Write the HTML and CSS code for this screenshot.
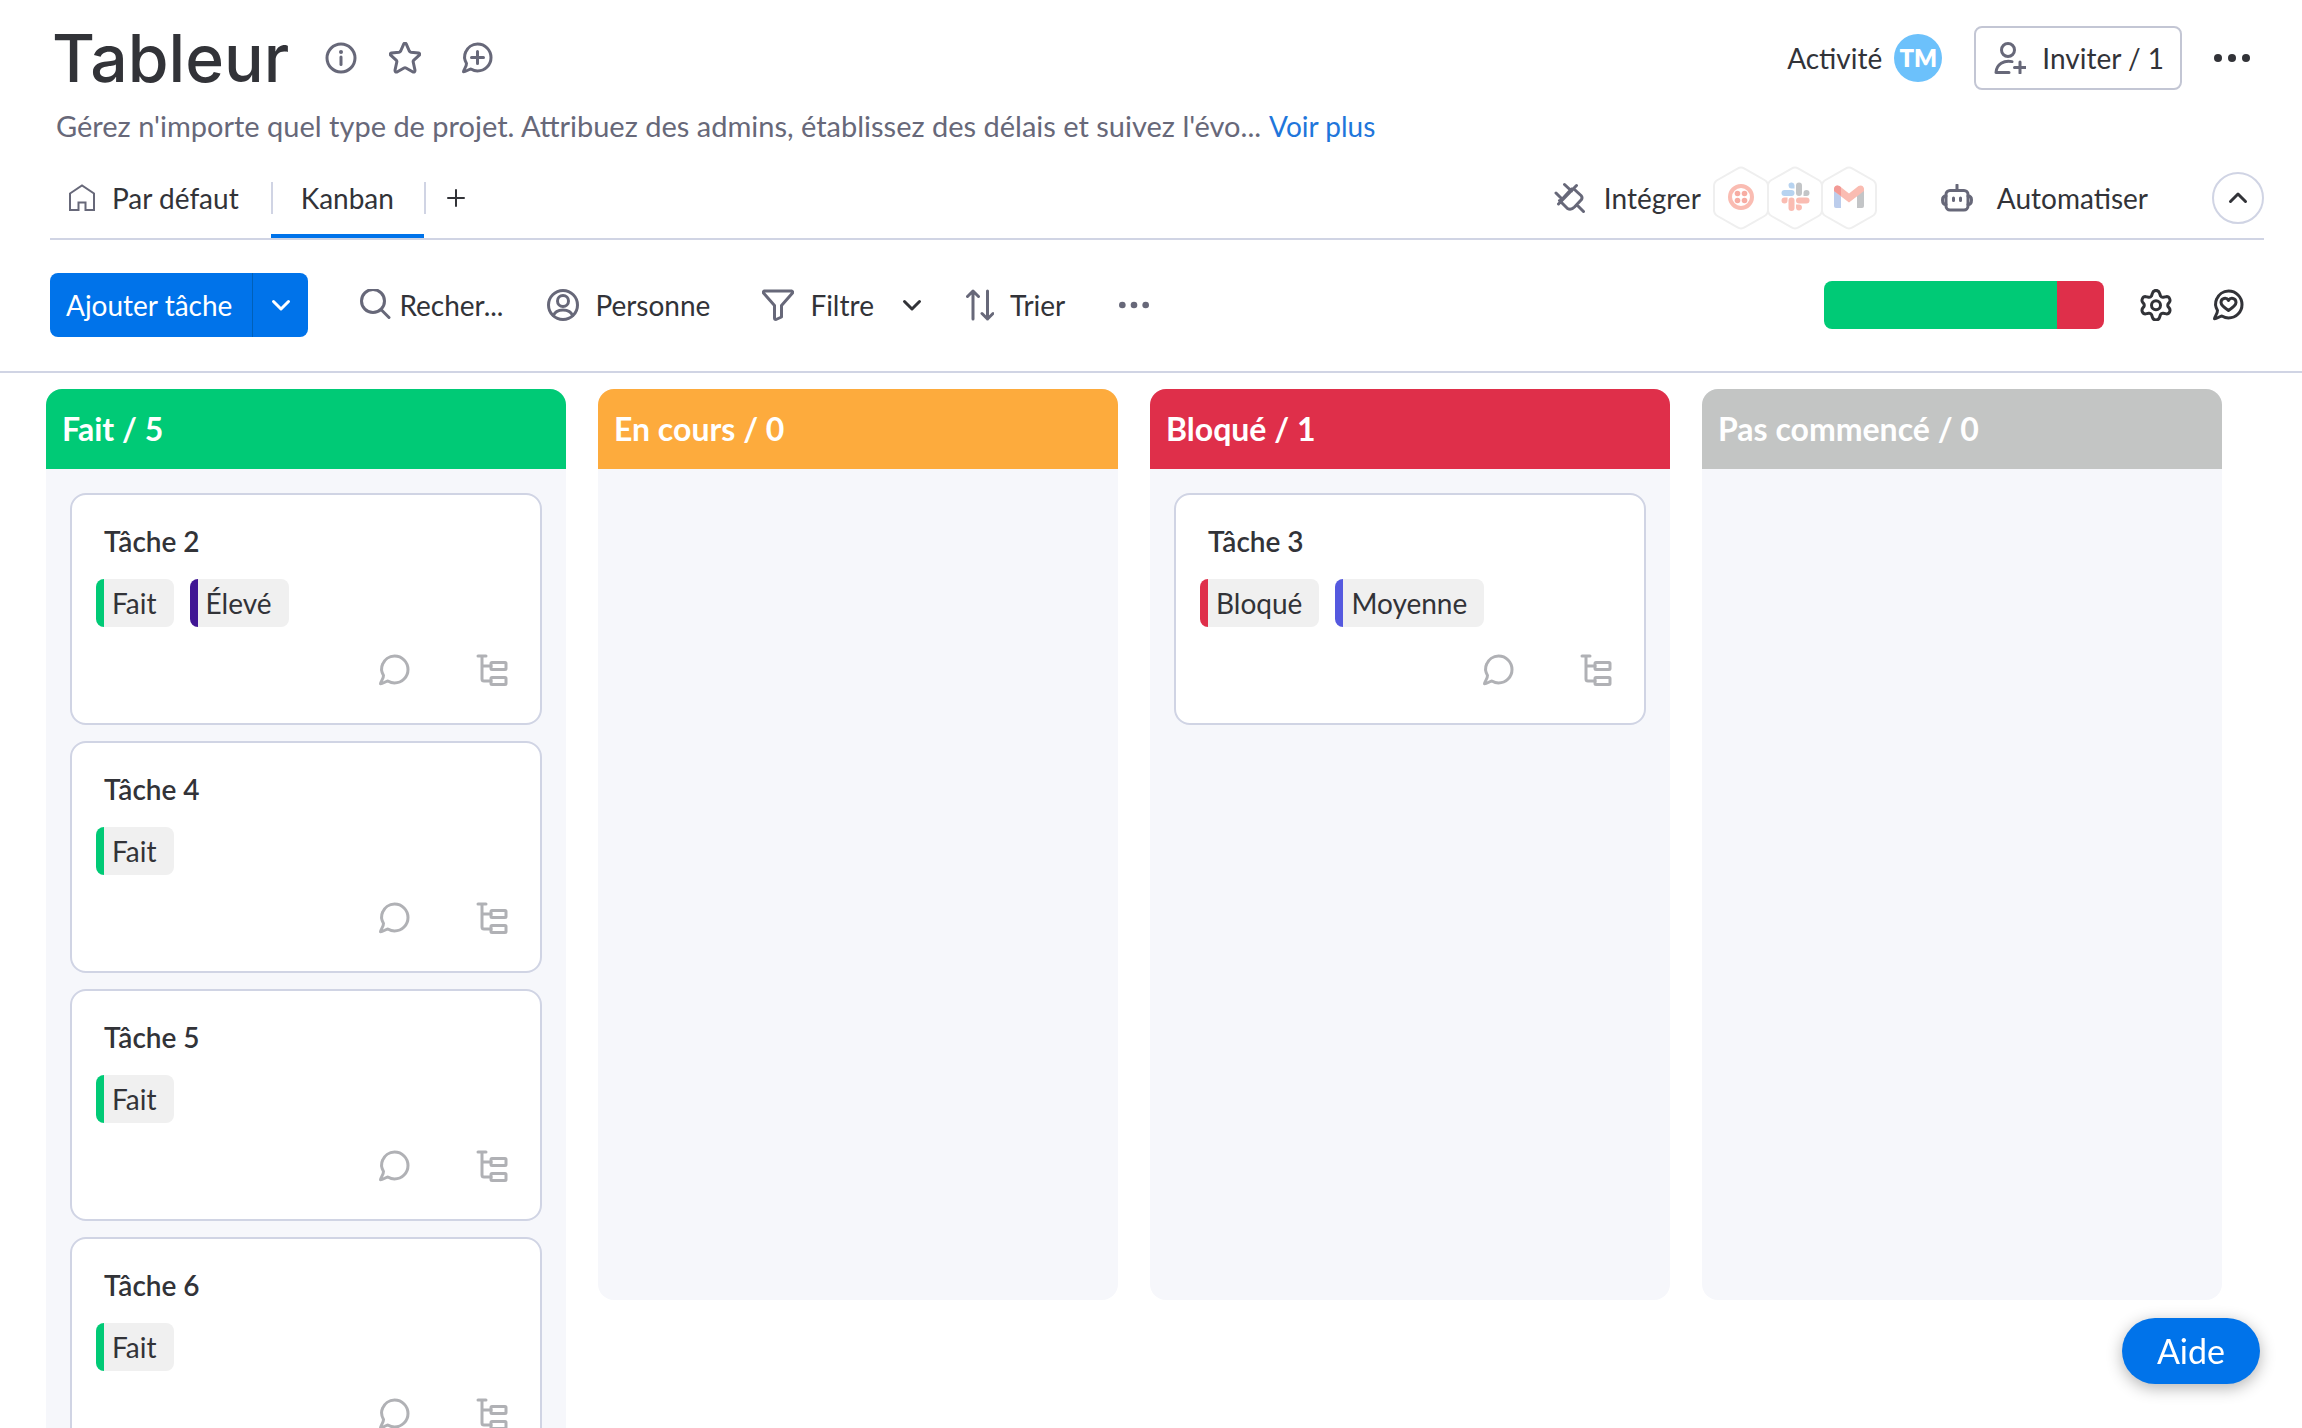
FILE: index.html
```html
<!DOCTYPE html>
<html lang="fr">
<head>
<meta charset="utf-8">
<title>Tableur</title>
<meta name="viewport" content="width=device-width, initial-scale=1">
<link rel="stylesheet" href="styles.css">
</head>
<body>
<svg class="sprite" aria-hidden="true">
  <symbol id="bubble" viewBox="0 0 32 32"><path d="M5.500 21.500 C3.500 18 3 13.500 4.700 10 C6.500 5.600 11 2 16.500 2 C24 2 30 8 30 15.500 C30 23 24 29 16.500 29 C14.300 29 12.500 28.500 9.800 27 C8 27.200 4.500 30 2.500 29.800 C1.800 29 5.800 24.500 5.500 21.500Z"/></symbol>
  <symbol id="tree" viewBox="0 0 32 32"><path d="M2 2H10M6 2V25Q6 27 8 27H15M6 12H15"/><rect x="15" y="8.500" width="15" height="7" rx="1"/><rect x="15" y="23.500" width="15" height="7" rx="1"/></symbol>
  <symbol id="chevron" viewBox="0 0 20 20"><path d="M2.500 6.500L10 14L17.500 6.500"/></symbol>
  <symbol id="hexagon" viewBox="0 0 56 64"><path d="M24.500 2.600Q28 .6 31.500 2.600L51.500 14Q55 16 55 20V44Q55 48 51.500 50L31.500 61.400Q28 63.400 24.500 61.400L4.500 50Q1 48 1 44V20Q1 16 4.500 14Z"/></symbol>
</svg>

<header class="board-header">
  <div class="title-row">
    <h1 class="title">Tableur</h1>
    <button class="icon-button" type="button" aria-label="Informations"><svg class="icon" viewBox="0 0 32 32"><circle cx="16" cy="16" r="14"/><path d="M16 15V22.500"/><circle class="dot" cx="16" cy="10" r="2"/></svg></button>
    <button class="icon-button" type="button" aria-label="Favoris"><svg class="icon" viewBox="0 0 32 32"><path d="M14.800 1.800Q16 .2 17.200 1.800L20.300 9Q20.800 10 22 10.200L29.500 11Q31.400 11.500 30.300 13.200L24.600 18.400Q24 19 24.200 20L26 28.300Q26 30.400 24 30L17 26Q16 25.500 15 26L8 30Q6 30.400 6 28.300L7.800 20Q8 19 7.400 18.400L1.700 13.200Q.6 11.500 2.500 11L10 10.200Q11.200 10 11.700 9Z"/></svg></button>
    <button class="icon-button discuss" type="button" aria-label="Nouvelle discussion"><svg class="icon" viewBox="0 0 32 32"><use href="#bubble"/><path d="M16.500 9.500V21.500M10.500 15.500H22.500"/></svg></button>
    <div class="title-actions">
      <button class="text-button activity" type="button">Activité <span class="avatar">TM</span></button>
      <button class="invite" type="button"><svg class="icon" viewBox="0 0 32 32"><circle cx="14" cy="8" r="6.500"/><path d="M18 19.600C10 18 2.500 22 2 30.500H15M26 20V31M20.500 25.500H31.500"/></svg>Inviter / 1</button>
      <button class="icon-button" type="button" aria-label="Plus d'options"><svg class="dots" viewBox="0 0 36 8"><circle cx="4" cy="4" r="4"/><circle cx="18" cy="4" r="4"/><circle cx="32" cy="4" r="4"/></svg></button>
    </div>
  </div>

  <div class="description-row">
    <p class="description">Gérez n'importe quel type de projet. Attribuez des admins, établissez des délais et suivez l'évo...</p>
    <a class="more-link" href="#">Voir plus</a>
  </div>

  <div class="view-row">
    <nav class="views">
      <a class="view" href="#"><svg class="home" viewBox="0 0 28 28"><path d="M2 9.500L14 1.500L26 9.500V26H17.500V18.500H10.500V26H2Z"/></svg>Par défaut</a>
      <a class="view current" href="#" aria-current="page">Kanban</a>
      <button class="add-view" type="button" aria-label="Ajouter une vue"><svg class="plus" viewBox="0 0 16 16"><path d="M8 0V16M0 8H16"/></svg></button>
    </nav>
    <div class="view-actions">
      <button class="text-button integrate" type="button"><svg class="icon" viewBox="0 0 32 32"><path d="M7 18.500L17 7.500Q18.800 6 20.500 7.500L27 13.500Q28.700 15.300 27.500 17.500L20.500 25Q17 28.500 13.500 26.500L5.500 18.500M10.500 2.500L17.500 9M22.500 3.500L4.500 22M2 11L8 17M23 23L29.500 29.500"/></svg>Intégrer</button>
      <div class="apps">
        <svg class="app" viewBox="0 0 56 64"><use class="hex" href="#hexagon"/><circle cx="28" cy="31" r="11" fill="none" stroke="#fabcb2" stroke-width="4"/><g fill="#f7ada3"><circle cx="24.500" cy="27.500" r="2.800"/><circle cx="31.500" cy="27.500" r="2.800"/><circle cx="24.500" cy="34.500" r="2.800"/><circle cx="31.500" cy="34.500" r="2.800"/></g></svg>
        <svg class="app" viewBox="0 0 56 64"><use class="hex" href="#hexagon"/><g fill="#b7d3f0"><rect x="14.500" y="24" width="13" height="6" rx="3"/><path d="M27.500 22.500H25A3 3 0 1 1 27.500 19Z"/></g><g fill="#c3c5c7"><rect x="29" y="16.500" width="6" height="13.500" rx="3"/><path d="M36.500 30V27A3 3 0 1 1 39.500 30Z"/></g><g fill="#fabcb2"><rect x="29" y="31.500" width="13.500" height="6" rx="3"/><rect x="21.500" y="31.500" width="6" height="13.500" rx="3"/><path d="M20.500 31.500V34.500A3 3 0 1 1 17.500 31.500ZM29 38.500H32A3 3 0 1 1 29 42Z"/></g></svg>
        <svg class="app" viewBox="0 0 56 64"><use class="hex" href="#hexagon"/><path fill="#bccdec" d="M13 24H20V42H15Q13 42 13 40Z"/><path fill="#c3c5c7" d="M36 24H43V40Q43 42 41 42H36Z"/><path fill="#fabcb2" d="M13 25V22.500Q14 18.500 18.500 20L28 27.500L37.500 20Q42 18.500 43 22.500V25L28 36.500Z"/><path fill="#f29a96" d="M13 25V22.500Q14 18.500 18.500 20L20 21.200V30Z"/></svg>
      </div>
      <button class="text-button automate" type="button"><svg class="robot" viewBox="0 0 32 28"><rect x="5" y="6.500" width="22" height="19.500" rx="4"/><path d="M16 1V6M5 12Q1.500 12 1.500 16Q1.500 20.500 5 20.500M27 12Q30.500 12 30.500 16Q30.500 20.500 27 20.500M12.500 14V16.500M19.500 14V16.500"/></svg>Automatiser</button>
      <button class="collapse" type="button" aria-label="Réduire l'en-tête"><svg class="chevron up"><use href="#chevron"/></svg></button>
    </div>
  </div>
</header>

<div class="toolbar">
  <div class="split-button">
    <button class="add-task" type="button">Ajouter tâche</button>
    <button class="add-menu" type="button" aria-label="Autres ajouts"><svg class="chevron"><use href="#chevron"/></svg></button>
  </div>
  <label class="search"><svg class="icon" viewBox="0 0 32 32"><circle cx="14" cy="12" r="11.500"/><path d="M22 20.500L30 28.500"/></svg><input type="text" placeholder="Recher..." aria-label="Rechercher"></label>
  <button class="text-button person" type="button"><svg class="icon" viewBox="0 0 32 32"><circle cx="16" cy="16" r="14.500"/><circle cx="16" cy="12" r="5.500"/><path d="M6.500 26.500C9 19 23 19 25.500 26.500"/></svg>Personne</button>
  <div class="filter">
    <button class="text-button" type="button"><svg class="icon" viewBox="0 0 32 32"><path d="M2.500 2H29.500Q31 2.500 30.500 4L19.500 16.500V28L14 30.500Q12.500 30.500 12.500 29V16.500L1.500 4Q1 2.500 2.500 2Z"/></svg>Filtre</button>
    <button class="icon-button" type="button" aria-label="Filtres avancés"><svg class="chevron"><use href="#chevron"/></svg></button>
  </div>
  <button class="text-button sort" type="button"><svg class="sort-icon" viewBox="0 0 28 32"><path d="M7 2V30M1.500 7.500L7 2L12.500 7.500M21.500 2V30M16 24.500L21.500 30L27 24.500"/></svg>Trier</button>
  <button class="icon-button" type="button" aria-label="Plus d'outils"><svg class="dots muted" viewBox="0 0 36 8"><circle cx="4" cy="4" r="4"/><circle cx="18" cy="4" r="4"/><circle cx="32" cy="4" r="4"/></svg></button>
  <div class="toolbar-end">
    <div class="battery" role="img" aria-label="Répartition des statuts"><span class="done" style="flex-grow:5"></span><span class="stuck" style="flex-grow:1"></span></div>
    <button class="icon-button strong" type="button" aria-label="Paramètres"><svg class="icon" viewBox="0 0 32 32"><path d="M12.500 4C13.500 .5 18.500 .5 19.500 4L20.500 7Q21.500 8.500 23.300 8.200L26.500 7.600C29.500 7.500 31 11.500 29.200 13.500L28 15Q27.500 16.300 28 17.500L29.200 19C31 21.500 29.500 25 26.500 24.900L23.300 24.300Q21.500 24 20.500 25.500L19.500 28.500C18.500 31.800 13.500 31.800 12.500 28.500L11.500 25.500Q10.500 24 8.700 24.300L5.500 24.900C2.500 25 1 21.500 2.800 19L4 17.500Q4.500 16.300 4 15L2.800 13.500C1 11.500 2.500 7.500 5.500 7.600L8.700 8.200Q10.500 8.500 11.500 7Z"/><circle cx="16" cy="16.300" r="4.500"/></svg></button>
    <button class="icon-button strong" type="button" aria-label="Donner un avis"><svg class="icon" viewBox="0 0 32 32"><use href="#bubble"/><path d="M16.500 11.500C14.500 8 9 9 9 13.500C9 16.500 13.500 19.500 16.500 21.500C19.500 19.500 24 16.500 24 13.500C24 9 18.500 8 16.500 11.500Z"/></svg></button>
  </div>
</div>

<main class="board">
  <section class="column">
    <h2 class="column-title done">Fait / 5</h2>
    <div class="cards">
      <article class="card">
        <h3>Tâche 2</h3>
        <div class="chips"><span class="chip is-done">Fait</span><span class="chip is-high">Élevé</span></div>
        <div class="card-actions"><button class="icon-button" type="button" aria-label="Discussion"><svg class="icon"><use href="#bubble"/></svg></button><button class="icon-button" type="button" aria-label="Sous-éléments"><svg class="icon"><use href="#tree"/></svg></button></div>
      </article>
      <article class="card">
        <h3>Tâche 4</h3>
        <div class="chips"><span class="chip is-done">Fait</span></div>
        <div class="card-actions"><button class="icon-button" type="button" aria-label="Discussion"><svg class="icon"><use href="#bubble"/></svg></button><button class="icon-button" type="button" aria-label="Sous-éléments"><svg class="icon"><use href="#tree"/></svg></button></div>
      </article>
      <article class="card">
        <h3>Tâche 5</h3>
        <div class="chips"><span class="chip is-done">Fait</span></div>
        <div class="card-actions"><button class="icon-button" type="button" aria-label="Discussion"><svg class="icon"><use href="#bubble"/></svg></button><button class="icon-button" type="button" aria-label="Sous-éléments"><svg class="icon"><use href="#tree"/></svg></button></div>
      </article>
      <article class="card">
        <h3>Tâche 6</h3>
        <div class="chips"><span class="chip is-done">Fait</span></div>
        <div class="card-actions"><button class="icon-button" type="button" aria-label="Discussion"><svg class="icon"><use href="#bubble"/></svg></button><button class="icon-button" type="button" aria-label="Sous-éléments"><svg class="icon"><use href="#tree"/></svg></button></div>
      </article>
    </div>
  </section>
  <section class="column">
    <h2 class="column-title working">En cours / 0</h2>
  </section>
  <section class="column">
    <h2 class="column-title stuck">Bloqué / 1</h2>
    <div class="cards">
      <article class="card">
        <h3>Tâche 3</h3>
        <div class="chips"><span class="chip is-stuck">Bloqué</span><span class="chip is-medium">Moyenne</span></div>
        <div class="card-actions"><button class="icon-button" type="button" aria-label="Discussion"><svg class="icon"><use href="#bubble"/></svg></button><button class="icon-button" type="button" aria-label="Sous-éléments"><svg class="icon"><use href="#tree"/></svg></button></div>
      </article>
    </div>
  </section>
  <section class="column">
    <h2 class="column-title idle">Pas commencé / 0</h2>
  </section>
</main>

<button class="help" type="button">Aide</button>
</body>
</html>
```
FILE: styles.css
```css
:root {
  --text: #323338;
  --muted: #676879;
  --line: #d0d4e4;
  --primary: #0073ea;
  --done: #00ca76;
  --working: #fdab3d;
  --stuck: #df2f4a;
  --idle: #c3c5c4;
}

* { box-sizing: border-box; }

body {
  margin: 0;
  height: 100vh;
  overflow: hidden;
  display: flex;
  flex-direction: column;
  background: #fff;
  color: var(--text);
  font: 28px/40px Lato, "Liberation Sans", sans-serif;
}

.sprite { display: none; }

button, input { font: inherit; color: inherit; }
button { padding: 0; border: 0; background: none; cursor: pointer; white-space: nowrap; }
a { color: inherit; text-decoration: none; }
h1, h2, h3, p { margin: 0; }

svg { display: block; flex: none; fill: none; stroke: var(--muted); stroke-width: 3px; stroke-linecap: round; stroke-linejoin: round; }
.icon { width: 32px; height: 32px; }
.icon .dot { fill: var(--muted); stroke: none; }
.icon-button { flex: none; color: var(--muted); }
.icon-button.strong svg { stroke: var(--text); }
.text-button { display: flex; align-items: center; gap: 16px; }
.chevron { width: 20px; height: 20px; stroke: var(--text); stroke-width: 3px; }
.chevron.up { transform: rotate(180deg); }
.dots { width: 36px; height: 8px; fill: var(--text); stroke: none; }
.dots.muted { width: 30px; fill: var(--muted); }

/* Header */
.board-header { padding: 18px 38px 0 50px; }
.title-row { display: flex; align-items: center; height: 80px; gap: 32px; padding-right: 14px; padding-left: 2px; }
.title { margin-right: 4px; font: 500 66px/80px Inter, "Liberation Sans", sans-serif; }
.discuss { margin-left: 8px; }
.title-actions { display: flex; align-items: center; margin-left: auto; gap: 32px; }
.activity { gap: 12px; }
.avatar { display: grid; place-items: center; width: 48px; height: 48px; border-radius: 50%; background: #6cc1fb; color: #fff; font-size: 24px; font-weight: 800; }
.invite { display: flex; align-items: center; gap: 16px; height: 64px; padding: 0 16px 0 18px; border: 2px solid #c3c6d4; border-radius: 8px; }

.description-row { display: flex; gap: 8px; padding: 8px 6px; }
.description { color: var(--muted); font-size: 29px; }
.more-link { color: #1f76db; }

.view-row { display: flex; justify-content: space-between; height: 86px; border-bottom: 2px solid var(--line); }
.views { display: flex; align-items: flex-end; }
.view { display: flex; align-items: center; gap: 16px; height: 80px; padding: 0 32px 0 18px; }
.home { width: 28px; height: 28px; stroke-width: 2px; stroke-linejoin: miter; }
.view.current { padding: 4px 30px 0; border-bottom: 4px solid var(--primary); background: linear-gradient(var(--line), var(--line)) 0 24px / 2px 32px no-repeat; }
.add-view { height: 32px; margin-bottom: 24px; padding: 0 22px; border-left: 2px solid var(--line); }
.plus { width: 16px; height: 16px; stroke: var(--text); stroke-width: 2px; overflow: visible; }
.view-actions { display: flex; align-items: center; height: 88px; }
.integrate { gap: 18px; }
.apps { display: flex; margin: 0 66px 0 12px; }
.app { width: 56px; height: 64px; margin-right: -2px; stroke: none; }
.app .hex { stroke: #efefef; stroke-width: 2px; }
.robot { width: 32px; height: 28px; }
.automate { gap: 24px; }
.collapse { display: grid; place-items: center; width: 52px; height: 52px; margin-left: 64px; border: 2px solid var(--line); border-radius: 50%; }

/* Toolbar */
.toolbar { display: flex; align-items: center; height: 133px; padding: 0 58px 2px 50px; border-bottom: 2px solid var(--line); }
.split-button { display: flex; height: 64px; border-radius: 8px; overflow: hidden; background: var(--primary); color: #fff; }
.add-task { padding: 0 20px 0 16px; }
.add-menu { width: 56px; padding: 0 18px; border-left: 1px solid #0060b9; }
.add-menu svg { stroke: #fff; }
.search { display: flex; align-items: center; gap: 8px; margin-left: 51px; }
.search input { width: 112px; padding: 0; border: 0; outline: 0; background: none; }
.search input::placeholder { color: var(--text); opacity: 1; }
.person { margin-left: 36px; }
.filter { display: flex; align-items: center; gap: 28px; margin: 0 44px 0 52px; }
.sort-icon { width: 28px; height: 32px; }
.sort { margin-right: 54px; }
.toolbar-end { display: flex; align-items: center; gap: 40px; margin-left: auto; }
.battery { display: flex; width: 280px; height: 48px; margin-right: -4px; border-radius: 8px; overflow: hidden; }
.done { background: var(--done); }
.working { background: var(--working); }
.stuck { background: var(--stuck); }
.idle { background: var(--idle); }

/* Board */
.board { flex: 1; min-height: 0; display: grid; grid-template-columns: repeat(4, minmax(0, 1fr)); align-items: start; gap: 32px; padding: 16px 80px 0 46px; overflow: hidden; }
.column { min-height: 911px; border-radius: 16px; background: #f6f7fb; overflow: hidden; }
.column-title { height: 80px; padding: 0 16px; color: #fff; font-size: 32px; font-weight: 700; line-height: 80px; }
.cards { display: grid; gap: 16px; padding: 24px; }
.card { height: 232px; padding: 26px 32px 0 24px; border: 2px solid var(--line); border-radius: 16px; background: #fff; }
.card h3 { padding-left: 8px; font-size: 28px; font-weight: 600; line-height: 40px; }
.chips { display: flex; gap: 16px; margin-top: 18px; }
.chip { height: 48px; padding: 0 17px 0 8px; border-left: 8px solid; border-radius: 8px; background: #f0f0f0; background-clip: padding-box; line-height: 48px; }
.is-done { border-color: var(--done); }
.is-high { border-color: #401694; }
.is-stuck { border-color: var(--stuck); }
.is-medium { border-color: #5559df; }
.card-actions { display: flex; justify-content: flex-end; gap: 66px; margin-top: 27px; }
.card-actions svg { stroke: #b0b1b5; }

.help { position: fixed; right: 42px; bottom: 44px; height: 66px; padding: 0 35px; border-radius: 33px; background: var(--primary); box-shadow: 0 4px 16px rgba(0, 0, 0, .3); color: #fff; font-size: 34px; }
```
